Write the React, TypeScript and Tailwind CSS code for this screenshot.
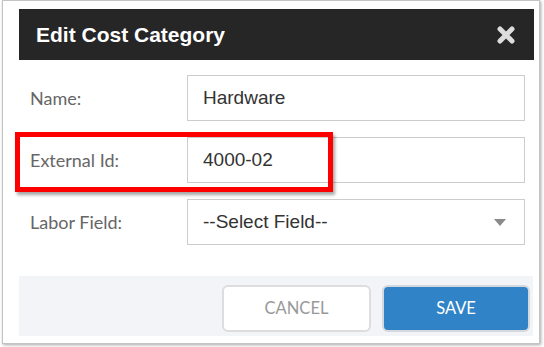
function Row(props: { label: string; children: React.ReactNode }) {
  return (
    <div className="flex items-center h-[46px]">
      <div className="w-[168px] pl-[11px] text-[18px] text-[#666] font-['Lato',sans-serif]">
        {props.label}
      </div>
      <div className="w-[338px] h-[46px] border border-[#cccccc] flex items-center pl-[15px] pr-[18px] text-[19px] text-[#333] font-['Liberation_Sans',Arial,sans-serif]">
        {props.children}
      </div>
    </div>
  );
}

export default function App() {
  return (
    <div className="w-[544px] h-[347px] bg-white relative overflow-hidden">
      <div className="ml-[2px] w-[538px] h-[344px] border border-[#c4c4c4] shadow-[1px_1px_3px_rgba(0,0,0,0.35)] pt-[8px] pl-[16px] flex flex-col">
        <div className="w-[515px] h-[51px] bg-[#262626] flex items-center justify-between pl-[17px] pr-[19px]">
          <span className="text-white font-bold text-[21px] font-['Liberation_Sans',Arial,sans-serif]">
            Edit Cost Category
          </span>
          <svg width="18" height="18" viewBox="0 0 18 18">
            <path d="M3 3 L15 15 M15 3 L3 15" stroke="#dddddd" strokeWidth="5" strokeLinecap="round" />
          </svg>
        </div>
        <div className="flex flex-col gap-[16px] pt-[15px]">
          <Row label="Name:">Hardware</Row>
          <Row label="External Id:">4000-02</Row>
          <Row label="Labor Field:">
            <span className="flex-1">--Select Field--</span>
            <svg width="12" height="7" viewBox="0 0 12 7">
              <path d="M0 0 L12 0 L6 7 Z" fill="#8a8a8a" />
            </svg>
          </Row>
        </div>
        <div className="mt-[31px] w-[514px] h-[60px] bg-[#f3f4f8] flex items-center justify-end gap-[11px] pr-[3px] pt-[4px]">
          <button className="w-[149px] h-[47px] rounded-[6px] border-2 border-[#dddddd] bg-white text-[16.5px] text-[#999] font-['Lato',sans-serif]">
            CANCEL
          </button>
          <button className="w-[148px] h-[47px] rounded-[6px] border-2 border-[#d4d9e0] bg-[#3083c6] text-[16.5px] text-white font-['Lato',sans-serif]">
            SAVE
          </button>
        </div>
      </div>
      <div className="absolute left-[15px] top-[132px] w-[318px] h-[60px] border-[5px] border-[#ff0000] shadow-[2px_3px_3px_rgba(0,0,0,0.35)]" />
    </div>
  );
}
